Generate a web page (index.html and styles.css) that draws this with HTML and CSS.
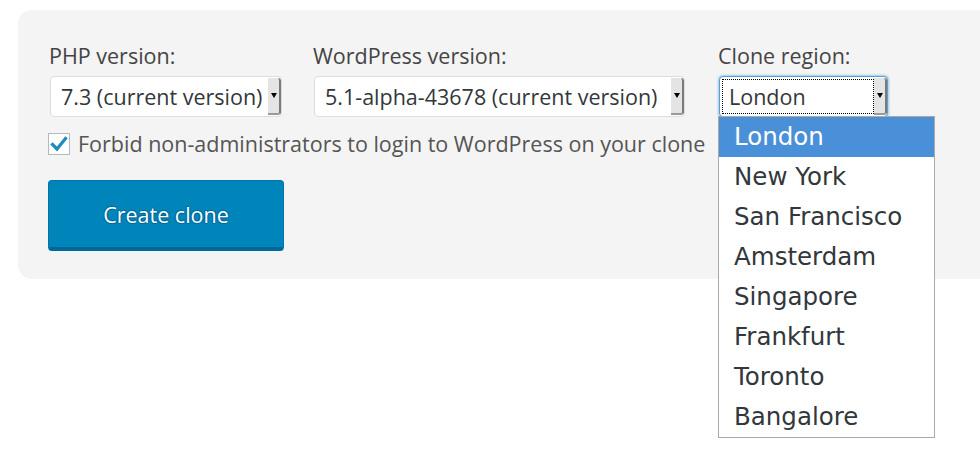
FILE: index.html
```html
<!DOCTYPE html>
<html>
<head>
<meta charset="utf-8">
<link rel="stylesheet" href="styles.css">
</head>
<body>
<div class="panel">
  <div class="fields">
    <div class="field">
      <div class="label">PHP version:</div>
      <div class="select w1"><span class="value">7.3 (current version)</span><span class="arrow"><i></i></span></div>
    </div>
    <div class="field">
      <div class="label">WordPress version:</div>
      <div class="select w2"><span class="value">5.1-alpha-43678 (current version)</span><span class="arrow"><i></i></span></div>
    </div>
    <div class="field region">
      <div class="label">Clone region:</div>
      <div class="select w3 focused"><span class="value"><span class="ring">London</span></span><span class="arrow"><i></i></span></div>
      <ul class="dropdown">
        <li class="active">London</li>
        <li>New York</li>
        <li>San Francisco</li>
        <li>Amsterdam</li>
        <li>Singapore</li>
        <li>Frankfurt</li>
        <li>Toronto</li>
        <li>Bangalore</li>
      </ul>
    </div>
  </div>
  <label class="check"><span class="box"><svg viewBox="0 0 20 20" width="20" height="20"><path d="M3.5 10.5 L8 15 L16.5 4.5" fill="none" stroke="#1e8cbe" stroke-width="3.2" stroke-linecap="square"/></svg></span>Forbid non-administrators to login to WordPress on your clone</label>
  <button class="btn">Create clone</button>
</div>
</body>
</html>
```
FILE: styles.css
```css
html, body {
  margin: 0;
  padding: 0;
  background: #fff;
}
body {
  font-family: "Open Sans", "Noto Sans", sans-serif;
  color: #444;
  min-height: 450px;
}
.panel {
  margin: 10px 0 0 18px;
  height: 269px;
  box-sizing: border-box;
  background: #f4f4f4;
  border-radius: 14px 0 0 14px;
  padding: 33px 0 0 30px;
}
.fields {
  display: flex;
  gap: 30px;
}
.field {
  display: flex;
  flex-direction: column;
}
.label {
  font-size: 21.5px;
  line-height: 26px;
  margin-left: 1px;
  color: #444;
}
.select {
  margin-top: 7px;
  margin-left: 2px;
  height: 41px;
  box-sizing: border-box;
  background: #fff;
  border: 1px solid #ddd;
  border-radius: 4px;
  display: flex;
  align-items: stretch;
  font-size: 21.5px;
  color: #32373c;
}
.w1 { width: 232px; }
.w2 { width: 371px; }
.w3 { width: 169px; }
.value {
  flex: 1;
  padding-left: 10px;
  display: flex;
  align-items: center;
  white-space: nowrap;
  overflow: hidden;
}
.arrow {
  width: 11px;
  margin: 1px 0;
  background: #e4e4e4;
  border-right: 2px solid #7a7a7a;
  border-bottom: 2px solid #9a9a9a;
  border-radius: 0 3px 3px 0;
  display: flex;
  justify-content: center;
  align-items: center;
}
.arrow i {
  width: 0;
  height: 0;
  border-left: 3px solid transparent;
  border-right: 3px solid transparent;
  border-top: 5px solid #000;
}
.focused {
  border-color: #5b9dd9;
  box-shadow: 0 0 3px rgba(30, 140, 190, 0.8);
}
.focused .value {
  padding: 2px 0 2px 2px;
}
.ring {
  flex: 1;
  align-self: stretch;
  display: flex;
  align-items: center;
  padding-left: 7px;
  outline: 1px dotted #000;
  outline-offset: -1px;
}
.region {
  position: relative;
  margin-left: 2px;
}
.dropdown {
  position: absolute;
  left: 1px;
  top: 73px;
  width: 215px;
  margin: 0;
  padding: 0;
  list-style: none;
  background: #fff;
  border: 1px solid #a9a9a9;
  font-family: "DejaVu Sans", sans-serif;
  font-size: 24.5px;
  color: #32373c;
  z-index: 5;
}
.dropdown li {
  height: 40px;
  line-height: 40px;
  padding-left: 15px;
  white-space: nowrap;
}
.dropdown li.active {
  background: #4a90d9;
  color: #fff;
}
.check {
  display: flex;
  align-items: center;
  margin-top: 12px;
  font-size: 21.5px;
  color: #555;
}
.box {
  width: 20px;
  height: 20px;
  border: 1px solid #b4b9be;
  background: #fff;
  margin-right: 8px;
  display: flex;
}
.btn {
  display: block;
  margin-top: 22px;
  width: 236px;
  height: 71px;
  background: #0085ba;
  border: 1px solid #0073aa;
  border-bottom: 4px solid #006799;
  border-radius: 4px;
  color: #fff;
  font-family: "Open Sans", sans-serif;
  font-size: 21.5px;
  text-shadow: 0 -1px 1px #006799, 1px 0 1px #006799, 0 1px 1px #006799, -1px 0 1px #006799;
  padding: 0;
}
```
